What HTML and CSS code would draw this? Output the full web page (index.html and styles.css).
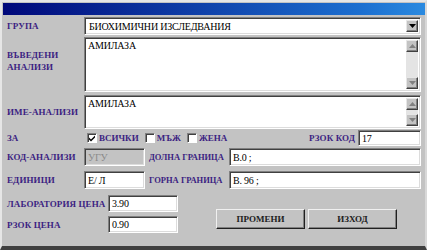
FILE: index.html
```html
<!DOCTYPE html>
<html lang="bg">
<head>
  <meta charset="UTF-8">
  <meta name="viewport" content="width=device-width, initial-scale=1.0">
  <title>Анализи</title>
  <link rel="stylesheet" href="styles.css">
</head>
<body>
  <div class="window">
    <div class="titlebar"></div>

    <div class="form">
      <div class="row row-group">
        <span class="lbl">ГРУПА</span>
        <div class="field select">
          <span class="value">БИОХИМИЧНИ ИЗСЛЕДВАНИЯ</span>
          <span class="drop-btn">
            <svg width="7" height="4" viewBox="0 0 7 4"><path d="M0 0h7L3.5 4z" fill="#000"/></svg>
          </span>
        </div>
      </div>

      <div class="row row-memo1">
        <span class="lbl lbl-two">ВЪВЕДЕНИ<br>АНАЛИЗИ</span>
        <div class="field memo">
          <div class="memo-text">АМИЛАЗА</div>
          <div class="scroll">
            <span class="sbtn"><svg width="7" height="4" viewBox="0 0 7 4"><path d="M0 4h7L3.5 0z" fill="#808080"/></svg></span>
            <span class="track"></span>
            <span class="sbtn"><svg width="7" height="4" viewBox="0 0 7 4"><path d="M0 0h7L3.5 4z" fill="#808080"/></svg></span>
          </div>
        </div>
      </div>

      <div class="row row-memo2">
        <span class="lbl">ИМЕ-АНАЛИЗИ</span>
        <div class="field memo">
          <div class="memo-text">АМИЛАЗА</div>
          <div class="scroll">
            <span class="sbtn"><svg width="7" height="4" viewBox="0 0 7 4"><path d="M0 4h7L3.5 0z" fill="#808080"/></svg></span>
            <span class="track"></span>
            <span class="sbtn"><svg width="7" height="4" viewBox="0 0 7 4"><path d="M0 0h7L3.5 4z" fill="#808080"/></svg></span>
          </div>
        </div>
      </div>

      <div class="row row-za">
        <span class="lbl">ЗА</span>
        <span class="check">
          <span class="box"><svg width="8" height="8" viewBox="0 0 8 8"><path d="M1 3.5l2 2L7 1.5v2L3 7.5l-2-2z" fill="#000"/></svg></span>
          <span class="check-lbl">ВСИЧКИ</span>
        </span>
        <span class="check">
          <span class="box"></span>
          <span class="check-lbl">МЪЖ</span>
        </span>
        <span class="check">
          <span class="box"></span>
          <span class="check-lbl">ЖЕНА</span>
        </span>
        <span class="lbl lbl-rzok">РЗОК КОД</span>
        <div class="field input input-code">17</div>
      </div>

      <div class="row row-kod">
        <span class="lbl">КОД-АНАЛИЗИ</span>
        <div class="field input input-short disabled">УГУ</div>
        <span class="lbl lbl-mid">ДОЛНА ГРАНИЦА</span>
        <div class="field input input-wide">В.0 ;</div>
      </div>

      <div class="row row-ed">
        <span class="lbl">ЕДИНИЦИ</span>
        <div class="field input input-short">Е/ Л</div>
        <span class="lbl lbl-mid">ГОРНА ГРАНИЦА</span>
        <div class="field input input-wide">В. 96 ;</div>
      </div>

      <div class="bottom">
        <div class="prices">
          <div class="row row-price">
            <span class="lbl lbl-price">ЛАБОРАТОРИЯ ЦЕНА</span>
            <div class="field input input-price">3.90</div>
          </div>
          <div class="row row-price">
            <span class="lbl lbl-price">РЗОК ЦЕНА</span>
            <div class="field input input-price">0.90</div>
          </div>
        </div>
        <div class="buttons">
          <button class="btn">ПРОМЕНИ</button>
          <button class="btn">ИЗХОД</button>
        </div>
      </div>
    </div>
  </div>
</body>
</html>
```

FILE: styles.css
```css
body {
  margin: 0;
  background-color: #c3c3c3;
  font-family: "Liberation Serif", "DejaVu Serif", serif;
}

.window {
  width: 427px;
  height: 250px;
  box-sizing: border-box;
  background-color: #c3c3c3;
  border-style: solid;
  border-width: 2px 2px 4px 2px;
  border-color: #e6e6e6 #d8d8d8 #404040 #e6e6e6;
  padding: 1px 0 0 1px;
}

.titlebar {
  height: 12px;
  background: linear-gradient(to right, #00087a, #1c6fd0 85%, #2a8ae0);
}

.form {
  padding: 2px 4px 0 4px;
}

.row {
  display: flex;
  align-items: center;
}

.lbl {
  width: 77px;
  flex-shrink: 0;
  color: #3c1f82;
  font-weight: bold;
  font-size: 9px;
  letter-spacing: 0.1px;
  white-space: nowrap;
}

/* sunken field */
.field {
  box-sizing: border-box;
  background-color: #fff;
  border-style: solid;
  border-width: 1px;
  border-color: #808080 #fff #fff #808080;
  box-shadow: inset 1px 1px 0 #404040, inset -1px -1px 0 #dcdcdc;
  font-size: 10px;
  color: #000;
}

.select {
  flex: 1;
  height: 18px;
  display: flex;
  align-items: center;
  padding: 2px;
}

.select .value {
  flex: 1;
  padding-left: 2px;
  letter-spacing: -0.2px;
}

.drop-btn,
.sbtn {
  width: 12px;
  height: 12px;
  box-sizing: border-box;
  display: flex;
  align-items: center;
  justify-content: center;
  background-color: #c3c3c3;
  border-style: solid;
  border-width: 1px;
  border-color: #e6e6e6 #404040 #404040 #e6e6e6;
  box-shadow: inset -1px -1px 0 #808080;
}

.row-group {
  height: 18px;
}

.row-memo1 {
  margin-top: 2px;
  align-items: flex-start;
}

.row-memo2 {
  margin-top: 3px;
}

.lbl-two {
  padding-top: 12px;
  line-height: 12px;
}

.memo {
  flex: 1;
  display: flex;
  padding: 2px;
}

.row-memo1 .memo {
  height: 55px;
}

.row-memo2 .memo {
  height: 34px;
}

.memo-text {
  flex: 1;
  padding-left: 1px;
  line-height: 11px;
  letter-spacing: -0.2px;
}

.scroll {
  width: 12px;
  display: flex;
  flex-direction: column;
}

.track {
  flex: 1;
  background-color: #e4e4e4;
}

.row-za {
  margin-top: 1px;
  height: 16px;
}

.check {
  display: flex;
  align-items: center;
  margin-left: 3px;
  margin-right: 3px;
}

.check .box {
  width: 10px;
  height: 10px;
  box-sizing: border-box;
  background-color: #fff;
  border-style: solid;
  border-width: 1px;
  border-color: #808080 #fff #fff #808080;
  box-shadow: inset 1px 1px 0 #404040;
  display: flex;
  align-items: center;
  justify-content: center;
}

.check-lbl {
  margin-left: 2px;
  color: #3c1f82;
  font-weight: bold;
  font-size: 9px;
}

.lbl-rzok {
  width: auto;
  margin-left: auto;
  margin-right: 3px;
}

.input {
  height: 17px;
  display: flex;
  align-items: center;
  padding-left: 3px;
  letter-spacing: -0.2px;
}

.input-code {
  width: 63px;
  height: 16px;
}

.row-kod {
  margin-top: 2px;
}

.row-ed {
  margin-top: 5px;
}

.input-short {
  width: 61px;
  height: 18px;
}

.disabled {
  background-color: #c3c3c3;
  color: #8a8a8a;
}

.lbl-mid {
  width: 80px;
  margin-left: 4px;
  font-size: 8.5px;
  letter-spacing: 0;
}

.input-wide {
  flex: 1;
  height: 18px;
}

.bottom {
  display: flex;
  margin-top: 6px;
}

.prices {
  display: flex;
  flex-direction: column;
  gap: 4px;
}

.lbl-price {
  width: 101px;
}

.input-price {
  width: 70px;
}

.buttons {
  display: flex;
  gap: 3px;
  margin-left: 38px;
  margin-top: 14px;
}

.btn {
  width: 89px;
  height: 20px;
  padding: 0;
  background-color: #c3c3c3;
  border-style: solid;
  border-width: 1px;
  border-color: #f0f0f0 #202020 #202020 #f0f0f0;
  box-shadow: inset -1px -1px 0 #808080;
  font-family: "Liberation Serif", serif;
  font-weight: bold;
  font-size: 9px;
  color: #202020;
}
```
